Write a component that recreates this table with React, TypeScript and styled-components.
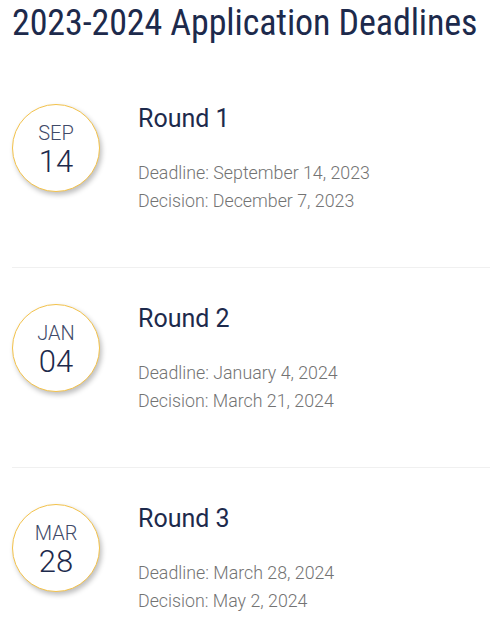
import React from "react";
import styled, { createGlobalStyle } from "styled-components";

const GlobalStyle = createGlobalStyle`
  html, body { margin: 0; padding: 0; background: #ffffff; }
  body { font-family: Roboto, "Liberation Sans", sans-serif; }
`;

const Page = styled.div`
  padding: 0 1px 0 12px;
`;

const Title = styled.h1`
  margin: 2px 0 23px;
  font-family: Roboto, "Liberation Sans", sans-serif;
  font-weight: 400;
  font-size: 36px;
  line-height: 43px;
  font-stretch: 87.5%;
  letter-spacing: -0.1px;
  color: #1d2a4c;
  white-space: nowrap;
`;

const List = styled.ul`
  list-style: none;
  margin: 0;
  padding: 0;
`;

const Item = styled.li`
  display: flex;
  align-items: flex-start;
  gap: 38px;
  padding: 36px 0 52px;
  border-bottom: 1px solid #f0f0f0;
  &:last-child { border-bottom: none; }
`;

const DateBadge = styled.div`
  flex: 0 0 auto;
  box-sizing: border-box;
  width: 88px;
  height: 88px;
  padding-top: 18px;
  border-radius: 50%;
  border: 1.5px solid #f3c24a;
  background: #ffffff;
  box-shadow: 2px 3px 5px rgba(0, 0, 0, 0.25);
  display: flex;
  flex-direction: column;
  align-items: center;
  justify-content: flex-start;
  color: #1d2a4c;
`;

const Month = styled.span`
  font-size: 20px;
  font-weight: 300;
  line-height: 20px;
  color: #3f4a68;
  text-transform: uppercase;
`;

const Day = styled.span`
  margin-top: 4px;
  font-size: 31px;
  font-weight: 300;
  line-height: 30px;
  color: #1d2a4c;
`;

const Info = styled.div`
  display: flex;
  flex-direction: column;
`;

const RoundName = styled.h2`
  margin: 0 0 25px;
  font-size: 25px;
  font-weight: 400;
  line-height: 30px;
  color: #1d2a4c;
`;

const Detail = styled.p`
  margin: 0;
  font-size: 17.8px;
  font-weight: 300;
  line-height: 28px;
  color: #737373;
  white-space: nowrap;
`;

const rounds = [
  { month: "Sep", day: "14", name: "Round 1", deadline: "September 14, 2023", decision: "December 7, 2023" },
  { month: "Jan", day: "04", name: "Round 2", deadline: "January 4, 2024", decision: "March 21, 2024" },
  { month: "Mar", day: "28", name: "Round 3", deadline: "March 28, 2024", decision: "May 2, 2024" },
];

export default function App() {
  return (
    <>
      <GlobalStyle />
      <Page>
        <Title>2023-2024 Application Deadlines</Title>
        <List>
          {rounds.map((r) => (
            <Item key={r.name}>
              <DateBadge>
                <Month>{r.month}</Month>
                <Day>{r.day}</Day>
              </DateBadge>
              <Info>
                <RoundName>{r.name}</RoundName>
                <Detail>Deadline: {r.deadline}</Detail>
                <Detail>Decision: {r.decision}</Detail>
              </Info>
            </Item>
          ))}
        </List>
      </Page>
    </>
  );
}
